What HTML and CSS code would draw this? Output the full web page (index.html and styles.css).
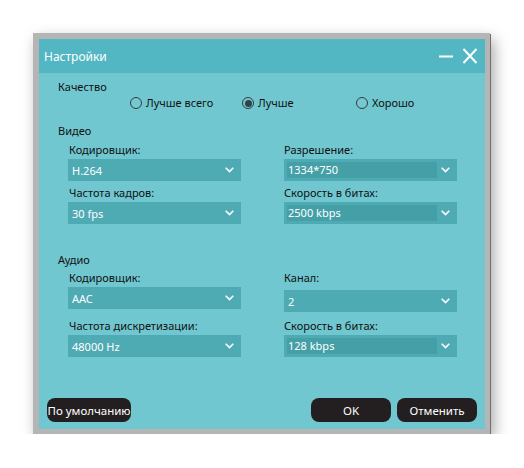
FILE: index.html
```html
<!DOCTYPE html>
<html lang="ru">
<head>
<meta charset="utf-8">
<title>Настройки</title>
<link rel="stylesheet" href="styles.css">
</head>
<body>
<div class="window">
  <div class="titlebar">
    <span class="title">Настройки</span>
    <div class="controls">
      <svg class="ctl" width="16" height="16" viewBox="0 0 16 16"><path d="M1 8.5H15" stroke="#fff" stroke-width="2"/></svg>
      <svg class="ctl" width="16" height="16" viewBox="0 0 16 16"><path d="M1.5 1L14.5 15M14.5 1L1.5 15" stroke="#fff" stroke-width="2"/></svg>
    </div>
  </div>
  <div class="content">
    <div class="section-label">Качество</div>
    <div class="radios">
      <label class="radio"><span class="circle"></span>Лучше всего</label>
      <label class="radio"><span class="circle checked"></span>Лучше</label>
      <label class="radio"><span class="circle"></span>Хорошо</label>
    </div>

    <div class="section-label video">Видео</div>
    <div class="cols video-cols">
      <div class="col">
        <div class="label">Кодировщик:</div>
        <div class="dd"><span class="val">H.264</span><svg class="chev" width="9" height="6" viewBox="0 0 9 6"><path d="M0.7 0.8L4.5 4.6L8.3 0.8" fill="none" stroke="#fff" stroke-width="1.6"/></svg></div>
        <div class="label gap">Частота кадров:</div>
        <div class="dd"><span class="val">30 fps</span><svg class="chev" width="9" height="6" viewBox="0 0 9 6"><path d="M0.7 0.8L4.5 4.6L8.3 0.8" fill="none" stroke="#fff" stroke-width="1.6"/></svg></div>
      </div>
      <div class="col">
        <div class="label">Разрешение:</div>
        <div class="dd edit"><span class="field">1334*750</span><svg class="chev" width="9" height="6" viewBox="0 0 9 6"><path d="M0.7 0.8L4.5 4.6L8.3 0.8" fill="none" stroke="#fff" stroke-width="1.6"/></svg></div>
        <div class="label gap">Скорость в битах:</div>
        <div class="dd edit"><span class="field">2500 kbps</span><svg class="chev" width="9" height="6" viewBox="0 0 9 6"><path d="M0.7 0.8L4.5 4.6L8.3 0.8" fill="none" stroke="#fff" stroke-width="1.6"/></svg></div>
      </div>
    </div>

    <div class="section-label audio">Аудио</div>
    <div class="cols audio-cols">
      <div class="col">
        <div class="label">Кодировщик:</div>
        <div class="dd"><span class="val">AAC</span><svg class="chev" width="9" height="6" viewBox="0 0 9 6"><path d="M0.7 0.8L4.5 4.6L8.3 0.8" fill="none" stroke="#fff" stroke-width="1.6"/></svg></div>
        <div class="label gap-l">Частота дискретизации:</div>
        <div class="dd"><span class="val">48000 Hz</span><svg class="chev" width="9" height="6" viewBox="0 0 9 6"><path d="M0.7 0.8L4.5 4.6L8.3 0.8" fill="none" stroke="#fff" stroke-width="1.6"/></svg></div>
      </div>
      <div class="col">
        <div class="label">Канал:</div>
        <div class="dd lower"><span class="val">2</span><svg class="chev" width="9" height="6" viewBox="0 0 9 6"><path d="M0.7 0.8L4.5 4.6L8.3 0.8" fill="none" stroke="#fff" stroke-width="1.6"/></svg></div>
        <div class="label gap-r">Скорость в битах:</div>
        <div class="dd edit"><span class="field">128 kbps</span><svg class="chev" width="9" height="6" viewBox="0 0 9 6"><path d="M0.7 0.8L4.5 4.6L8.3 0.8" fill="none" stroke="#fff" stroke-width="1.6"/></svg></div>
      </div>
    </div>

    <div class="buttons">
      <button class="btn default">По умолчанию</button>
      <div class="right-btns">
        <button class="btn wide">OK</button>
        <button class="btn wide">Отменить</button>
      </div>
    </div>
  </div>
</div>
</body>
</html>
```

FILE: styles.css
```css
html, body {
  margin: 0;
  padding: 0;
  background: #ffffff;
}
body {
  font-family: "Noto Sans", "Open Sans", sans-serif;
  font-size: 11px;
  color: #111;
}
.window {
  margin: 33px 0 0 33px;
  width: 446px;
  height: 390px;
  border: 6px solid #b5b5b5;
  border-right-width: 5px;
  border-bottom-width: 5px;
  box-shadow: 1px 1px 0 #707070, 4px 6px 14px rgba(0, 0, 0, 0.35);
  display: flex;
  flex-direction: column;
  background: #70c7cf;
}
.titlebar {
  height: 34px;
  background: #53b7c3;
  display: flex;
  align-items: center;
  justify-content: space-between;
  padding: 0 7px 0 5px;
}
.title {
  color: #fff;
  font-size: 12px;
}
.controls {
  display: flex;
  gap: 8px;
  align-items: center;
}
.ctl {
  display: block;
}
.content {
  flex: 1;
  display: flex;
  flex-direction: column;
  padding: 6px 8px 7px 19px;
}
.section-label {
  line-height: 16px;
  height: 16px;
}
.section-label.video {
  margin-top: 12px;
}
.section-label.audio {
  margin-top: 28px;
}
.radios {
  display: grid;
  grid-template-columns: 112px 114px auto;
  padding-left: 72px;
  height: 16px;
  align-items: center;
}
.radio {
  display: flex;
  align-items: center;
  gap: 4px;
  line-height: 16px;
}
.circle {
  width: 10px;
  height: 10px;
  border: 1.4px solid #333c3e;
  border-radius: 50%;
  display: inline-flex;
  align-items: center;
  justify-content: center;
  background: #74c9d1;
}
.circle.checked::after {
  content: "";
  width: 7px;
  height: 7px;
  border-radius: 50%;
  background: #2b4448;
}
.cols {
  display: grid;
  grid-template-columns: 173px 173px;
  column-gap: 43px;
  padding-left: 10px;
}
.video-cols {
  margin-top: 3px;
}
.audio-cols {
  margin-top: 2px;
}
.col {
  display: flex;
  flex-direction: column;
}
.label {
  line-height: 16px;
  height: 16px;
}
.col:first-child .label {
  padding-left: 1px;
}
.label.gap {
  margin-top: 4px;
}
.label.gap-l {
  margin-top: 9px;
}
.label.gap-r {
  margin-top: 6px;
}
.dd {
  margin-top: 1px;
  height: 22px;
  background: #4eaab3;
  display: flex;
  align-items: center;
  justify-content: space-between;
  padding: 0 7px 0 4px;
  color: #fff;
}
.dd.lower {
  margin-top: 4px;
}
.dd.edit {
  padding-left: 3px;
}
.field {
  width: 150px;
  height: 16px;
  line-height: 16px;
  background: #459fa7;
  box-sizing: border-box;
  padding-left: 1px;
}
.chev {
  display: block;
}
.buttons {
  margin-top: auto;
  margin-left: -11px;
  display: flex;
  justify-content: space-between;
  align-items: center;
}
.right-btns {
  display: flex;
  gap: 6px;
}
.btn {
  height: 24px;
  border: none;
  border-radius: 8px;
  background: #231f20;
  color: #fff;
  font-family: "Noto Sans", "Open Sans", sans-serif;
  font-size: 11.5px;
  padding: 0;
  white-space: nowrap;
}
.btn.default {
  width: 84px;
}
.btn.wide {
  width: 80px;
}
```
